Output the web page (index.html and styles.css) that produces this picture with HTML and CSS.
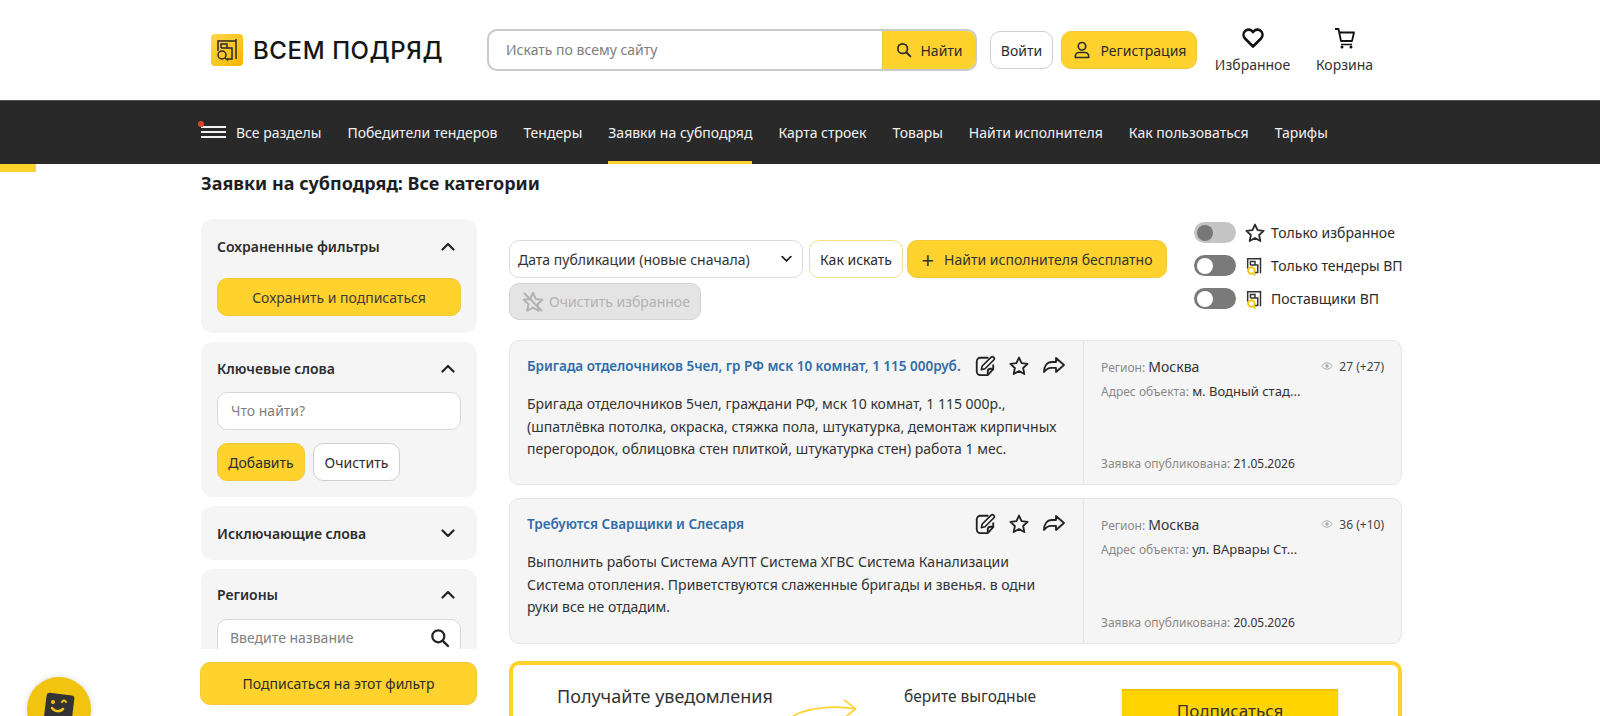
FILE: index.html
```html
<!DOCTYPE html>
<html lang="ru">
<head>
<meta charset="utf-8">
<title>Всем подряд</title>
<link rel="stylesheet" href="styles.css">
</head>
<body>
<svg class="defs" width="0" height="0" aria-hidden="true">
  <defs>
    <symbol id="star" viewBox="0 0 24 24"><path d="M12 2.8l2.8 6.1 6.6.8-4.9 4.5 1.3 6.6L12 17.5l-5.8 3.3 1.3-6.6L2.6 9.7l6.6-.8z" fill="none" stroke="currentColor" stroke-width="2" stroke-linejoin="round"/></symbol>
    <symbol id="vp" viewBox="0 0 24 24"><g fill="none" stroke="#333" stroke-width="1.6"><path d="M4 15V4h14"/><path d="M18 3v17"/><path d="M7 11V7h5v4"/><path d="M7 11h8v8h-3"/></g><circle cx="8" cy="17" r="3.6" fill="none" stroke="#f5c518" stroke-width="2"/><path d="M10.5 20l2 2.4" stroke="#f5c518" stroke-width="2"/></symbol>
    <symbol id="edit" viewBox="0 0 24 24"><path d="M21 11v4.5L15 22H7a4 4 0 0 1-4-4V7a4 4 0 0 1 4-4h8" fill="none" stroke="currentColor" stroke-width="2" stroke-linecap="round"/><path d="M15 21v-3a3 3 0 0 1 3-3h3" fill="none" stroke="currentColor" stroke-width="2"/><path d="M8 16l1-4 9.5-9.5a1.8 1.8 0 0 1 3 3L12 15z" fill="none" stroke="currentColor" stroke-width="1.8" stroke-linejoin="round"/></symbol>
    <symbol id="share" viewBox="0 0 24 24"><path d="M14 4l8 7-8 7v-4.2H9c-3 0-5 1.500-7 4.200 0-6 3-10 8-10h4z" fill="none" stroke="currentColor" stroke-width="1.800" stroke-linejoin="round"/></symbol>
    <symbol id="eye" viewBox="0 0 24 24"><path d="M1.500 12S5.500 5.500 12 5.500 22.500 12 22.500 12 18.500 18.500 12 18.500 1.500 12 1.500 12z" fill="none" stroke="currentColor" stroke-width="2"/><circle cx="12" cy="12" r="3.500" fill="currentColor"/></symbol>
    <symbol id="chev-up" viewBox="0 0 14 9"><path d="M1.500 7.500L7 2l5.500 5.500" fill="none" stroke="currentColor" stroke-width="2.200" stroke-linecap="round" stroke-linejoin="round"/></symbol>
    <symbol id="chev-down" viewBox="0 0 14 9"><path d="M1.500 1.500L7 7l5.500-5.500" fill="none" stroke="currentColor" stroke-width="2.200" stroke-linecap="round" stroke-linejoin="round"/></symbol>
    <symbol id="search" viewBox="0 0 20 20"><circle cx="8.300" cy="8.300" r="6" fill="none" stroke="currentColor" stroke-width="2.200"/><path d="M12.800 12.800l5.200 5.200" stroke="currentColor" stroke-width="2.400" stroke-linecap="round"/></symbol>
  </defs>
</svg>

<header class="header">
  <a class="logo">
    <svg class="logo-mark" viewBox="0 0 32 32"><defs><linearGradient id="lg" x1="0" y1="0" x2="1" y2="1"><stop offset="0" stop-color="#ffd84a"/><stop offset="1" stop-color="#f7b500"/></linearGradient></defs><rect width="32" height="32" rx="4" fill="url(#lg)"/><g fill="none" stroke="#2a2a2a" stroke-width="1.500"><path d="M7 17V7h18"/><path d="M25 5v20"/><path d="M10 14v-4h6v4"/><path d="M10 14h11v11h-5"/><circle cx="11" cy="21" r="4"/><path d="M14 24l3 2.500"/></g></svg>
    <span class="logo-text">ВСЕМ ПОДРЯД</span>
  </a>
  <form class="search">
    <span class="search-input">Искать по всему сайту</span>
    <span class="search-btn"><svg class="ic16"><use href="#search"/></svg>Найти</span>
  </form>
  <a class="btn btn-white login">Войти</a>
  <a class="btn btn-yellow reg">
    <svg class="ic20" viewBox="0 0 24 24"><circle cx="12" cy="7.500" r="4.500" fill="none" stroke="currentColor" stroke-width="2"/><path d="M4 21v-1.500A4.500 4.500 0 0 1 8.500 15h7a4.500 4.500 0 0 1 4.500 4.500V21z" fill="none" stroke="currentColor" stroke-width="2" stroke-linejoin="round"/></svg>
    Регистрация
  </a>
  <a class="head-link fav">
    <svg class="ic24" viewBox="0 0 24 24"><path d="M12 20.500l-8-8a5.200 5.200 0 0 1 0-7.300 5 5 0 0 1 7.200 0l.8.900.8-.9a5 5 0 0 1 7.200 0 5.200 5.200 0 0 1 0 7.300z" fill="none" stroke="#111" stroke-width="2.600" stroke-linejoin="round"/></svg>
    <span>Избранное</span>
  </a>
  <a class="head-link cart">
    <svg class="ic24" viewBox="0 0 24 24"><path d="M2 3h3.500l2.500 12h11l2-8.500H6.500" fill="none" stroke="#111" stroke-width="1.800" stroke-linejoin="round"/><path d="M8 18.500h11" stroke="#111" stroke-width="1.500"/><circle cx="9" cy="21" r="1.500" fill="#111"/><circle cx="18" cy="21" r="1.500" fill="#111"/></svg>
    <span>Корзина</span>
  </a>
</header>

<nav class="nav">
  <a class="nav-item nav-all"><span class="burger"><i></i><i></i><i></i><b></b></span>Все разделы</a>
  <a class="nav-item">Победители тендеров</a>
  <a class="nav-item">Тендеры</a>
  <a class="nav-item active">Заявки на субподряд</a>
  <a class="nav-item">Карта строек</a>
  <a class="nav-item">Товары</a>
  <a class="nav-item">Найти исполнителя</a>
  <a class="nav-item">Как пользоваться</a>
  <a class="nav-item">Тарифы</a>
</nav>
<div class="progress"></div>

<main class="page">
  <h1 class="title">Заявки на субподряд: Все категории</h1>
  <div class="columns">
    <aside class="side">
      <div class="side-scroll">
        <section class="panel panel-saved">
          <div class="panel-head"><span>Сохраненные фильтры</span><svg class="chev"><use href="#chev-up"/></svg></div>
          <a class="btn btn-yellow btn-full saved-btn">Сохранить и подписаться</a>
        </section>
        <section class="panel panel-keys">
          <div class="panel-head"><span>Ключевые слова</span><svg class="chev"><use href="#chev-up"/></svg></div>
          <div class="field">Что найти?</div>
          <div class="btn-row"><a class="btn btn-yellow add">Добавить</a><a class="btn btn-white clear">Очистить</a></div>
        </section>
        <section class="panel panel-closed">
          <div class="panel-head"><span>Исключающие слова</span><svg class="chev"><use href="#chev-down"/></svg></div>
        </section>
        <section class="panel panel-regions">
          <div class="panel-head"><span>Регионы</span><svg class="chev"><use href="#chev-up"/></svg></div>
          <div class="field field-search">Введите название<svg class="ic20 dark"><use href="#search"/></svg></div>
        </section>
      </div>
      <a class="btn btn-yellow sub-filter">Подписаться на этот фильтр</a>
    </aside>

    <div class="content">
      <div class="top">
        <div class="tools">
          <div class="select">Дата публикации (новые сначала)<svg class="sel-chev"><use href="#chev-down"/></svg></div>
          <a class="btn btn-outline how">Как искать</a>
          <a class="btn btn-yellow find"><span class="plus">+</span>Найти исполнителя бесплатно</a>
          <a class="btn btn-disabled clearfav">
            <svg class="ic24" viewBox="0 0 24 24"><use href="#star"/><path d="M3 3l18 18" stroke="currentColor" stroke-width="2"/></svg>
            Очистить избранное
          </a>
        </div>
        <div class="toggles">
          <label class="toggle"><span class="switch off"><i></i></span><svg class="ic22"><use href="#star"/></svg>Только избранное</label>
          <label class="toggle"><span class="switch on"><i></i></span><svg class="ic22"><use href="#vp"/></svg>Только тендеры ВП</label>
          <label class="toggle"><span class="switch on"><i></i></span><svg class="ic22"><use href="#vp"/></svg>Поставщики ВП</label>
        </div>
      </div>

      <article class="card">
        <div class="card-main">
          <div class="card-head">
            <a class="card-title">Бригада отделочников 5чел, гр РФ мск 10 комнат, 1 115 000руб.</a>
            <span class="card-icons"><svg class="ic22"><use href="#edit"/></svg><svg class="ic22"><use href="#star"/></svg><svg class="ic24"><use href="#share"/></svg></span>
          </div>
          <p class="card-text">Бригада отделочников 5чел, граждани РФ, мск 10 комнат, 1 115 000р., (шпатлёвка потолка, окраска, стяжка пола, штукатурка, демонтаж кирпичных перегородок, облицовка стен плиткой, штукатурка стен) работа 1 мес.</p>
        </div>
        <div class="card-side">
          <div class="meta-top"><span class="meta"><em>Регион:</em> <b class="big">Москва</b></span><span class="views"><svg class="ic12"><use href="#eye"/></svg>27 (+27)</span></div>
          <div class="meta addr"><em>Адрес объекта:</em> <b>м. Водный стад...</b></div>
          <div class="meta date"><em>Заявка опубликована:</em> <b>21.05.2026</b></div>
        </div>
      </article>

      <article class="card">
        <div class="card-main">
          <div class="card-head">
            <a class="card-title">Требуются Сварщики и Слесаря</a>
            <span class="card-icons"><svg class="ic22"><use href="#edit"/></svg><svg class="ic22"><use href="#star"/></svg><svg class="ic24"><use href="#share"/></svg></span>
          </div>
          <p class="card-text">Выполнить работы Система АУПТ Система ХГВС Система Канализации Система отопления. Приветствуются слаженные бригады и звенья. в одни руки все не отдадим.</p>
        </div>
        <div class="card-side">
          <div class="meta-top"><span class="meta"><em>Регион:</em> <b class="big">Москва</b></span><span class="views"><svg class="ic12"><use href="#eye"/></svg>36 (+10)</span></div>
          <div class="meta addr"><em>Адрес объекта:</em> <b>ул. ВАрвары Ст...</b></div>
          <div class="meta date"><em>Заявка опубликована:</em> <b>20.05.2026</b></div>
        </div>
      </article>

      <section class="banner">
        <div class="banner-a">Получайте уведомления</div>
        <svg class="banner-arrow" viewBox="0 0 80 30"><path d="M2 24C20 14 50 12 74 16M62 6l13 10-13 10" fill="none" stroke="#ffd22e" stroke-width="2" stroke-linecap="round" stroke-linejoin="round"/></svg>
        <div class="banner-b">берите выгодные<br>заказы первым</div>
        <a class="banner-btn">Подписаться</a>
      </section>
    </div>
  </div>
</main>

<div class="chat"><svg viewBox="0 0 36 36" class="chat-ic"><rect x="4" y="3" width="28" height="30" rx="3" fill="#333" transform="rotate(7 18 18)"/><circle cx="12" cy="11" r="2" fill="#f1c40f"/><path d="M21 11c1-2 3-2 4 0" stroke="#f1c40f" stroke-width="2" fill="none" stroke-linecap="round"/><path d="M11 17c3 4 8 4 11 1" stroke="#f1c40f" stroke-width="2.500" fill="none" stroke-linecap="round"/></svg></div>
</body>
</html>
```

FILE: styles.css
```css
* { box-sizing: border-box; }
html, body { margin: 0; height: 716px; overflow: hidden; background: #fff; }
body { font-family: "Noto Sans", "Open Sans", sans-serif; font-size: 14px; color: #2c2c2c; position: relative; }
a { color: inherit; text-decoration: none; }
.defs { position: absolute; }
svg { display: block; flex: none; }
.ic12 { width: 12px; height: 12px; }
.ic16 { width: 16px; height: 16px; }
.ic20 { width: 20px; height: 20px; }
.ic22 { width: 22px; height: 22px; }
.ic24 { width: 24px; height: 24px; }
.dark { color: #222; }

.header { height: 100px; display: flex; align-items: center; padding-left: 211px; }
.logo { display: flex; align-items: center; gap: 10px; width: 276px; }
.logo-mark { width: 32px; height: 32px; }
.logo-text { font-family: Inter, sans-serif; font-weight: 500; font-size: 24px; letter-spacing: 0.6px; color: #151515; white-space: nowrap; }
.search { display: flex; width: 490px; height: 42px; border: 2px solid #c9c9c9; border-radius: 10px; overflow: hidden; margin-right: 13px; }
.search-input { flex: 1; padding-left: 17px; line-height: 38px; color: #7d7d7d; font-size: 14px; }
.search-btn { width: 95px; margin: -2px -2px -2px 0; display: flex; align-items: center; justify-content: center; gap: 8px; background: #ffd22e; border: 1px solid #eec53a; border-radius: 0 10px 10px 0; font-size: 14px; }

.btn { display: flex; align-items: center; justify-content: center; border-radius: 10px; font-size: 14px; white-space: nowrap; }
.btn-yellow { background: #ffd22e; border: 1px solid #f2c93a; }
.btn-white { background: #fff; border: 1px solid #cfcfcf; }
.btn-outline { background: #fff; border: 1px solid #f5e08a; }
.btn-disabled { background: #e4e4e4; border: 1px solid #d2d2d2; color: #b2b2b2; }
.login { width: 63px; height: 38px; margin-right: 8px; }
.reg { width: 136px; height: 38px; gap: 9px; margin-right: 18px; }
.head-link { display: flex; flex-direction: column; align-items: center; color: #333; height: 48px; justify-content: space-between; }
.fav { width: 75px; margin-right: 26px; }
.cart { width: 57px; }

.nav { height: 64px; background: #292929; border-top: 1px solid #555; display: flex; padding-left: 201px; gap: 26px; color: #f2f2f2; }
.nav-item { display: flex; align-items: center; font-size: 14px; white-space: nowrap; border-bottom: 3px solid transparent; padding-top: 2px; }
.nav-item.active { border-bottom-color: #ffd22e; }
.nav-all { gap: 10px; }
.burger { position: relative; width: 25px; display: flex; flex-direction: column; gap: 3px; }
.burger i { display: block; height: 2px; background: #f2f2f2; }
.burger b { position: absolute; left: -3px; top: -5px; width: 6px; height: 6px; border-radius: 50%; background: #d9432b; }
.progress { height: 8px; width: 36px; background: #ffd22e; }

.page { padding: 0 198px 0 201px; margin-top: -8px; }
.title { margin: 0; padding: 7px 0 24px; font-size: 18px; line-height: 24px; font-weight: 700; color: #1f1f1f; }
.columns { display: flex; gap: 32px; align-items: flex-start; }

.side { width: 276px; flex: none; }
.side-scroll { height: 430px; overflow: hidden; display: flex; flex-direction: column; gap: 9px; }
.panel { background: #f5f5f5; border-radius: 12px; padding: 0 16px; flex: none; }
.panel-head { display: flex; align-items: center; justify-content: space-between; font-weight: 600; font-size: 14px; color: #2c2c2c; padding-right: 6px; }
.chev { width: 14px; height: 9px; color: #222; }
.panel-saved { height: 114px; padding-top: 17px; }
.panel-saved .panel-head { height: 20px; }
.btn-full { width: 100%; height: 38px; margin-top: 22px; color: #3b3b3b; }
.panel-keys { height: 155px; padding-top: 16px; }
.panel-keys .panel-head { height: 20px; }
.field { height: 38px; margin-top: 14px; background: #fff; border: 1px solid #d8d8d8; border-radius: 10px; padding-left: 13px; line-height: 36px; color: #7f7f7f; }
.btn-row { display: flex; gap: 8px; margin-top: 13px; }
.add { width: 88px; height: 38px; }
.clear { width: 87px; height: 38px; }
.panel-closed { height: 54px; display: flex; flex-direction: column; justify-content: center; }
.panel-regions { height: 100px; padding-top: 15px; }
.panel-regions .panel-head { height: 20px; }
.panel-regions .field { padding-left: 12px; display: flex; align-items: center; justify-content: space-between; padding-right: 10px; margin-top: 15px; }
.sub-filter { width: 277px; height: 43px; margin-top: 13px; margin-left: -1px; }

.content { flex: 1; min-width: 0; }
.top { height: 121px; display: flex; justify-content: space-between; }
.tools { display: flex; flex-wrap: wrap; gap: 5px 6px; width: 680px; padding-top: 21px; align-content: flex-start; }
.select { width: 294px; height: 38px; background: #fff; border: 1px solid #dcdcdc; border-radius: 10px; padding: 0 8px; display: flex; align-items: center; justify-content: space-between; color: #333; }
.sel-chev { width: 11px; height: 8px; color: #222; margin-right: 2px; }
.how { width: 94px; height: 38px; }
.find { width: 260px; height: 38px; gap: 10px; color: #333; margin-left: -2px; }
.plus { font-size: 22px; line-height: 20px; font-weight: 400; }
.clearfav { width: 192px; height: 37px; gap: 4px; justify-content: flex-start; padding-left: 11px; }
.toggles { padding-top: 3px; width: 208px; display: flex; flex-direction: column; gap: 12px; }
.toggle { display: flex; align-items: center; height: 21px; color: #2c2c2c; white-space: nowrap; }
.toggle .ic22 { margin: 0 5px 0 8px; }
.switch { width: 42px; height: 21px; border-radius: 11px; display: flex; align-items: center; padding: 0 3px; flex: none; }
.switch i { display: block; width: 16px; height: 16px; border-radius: 50%; }
.switch.off { background: #c4c4c4; }
.switch.off i { background: #777; }
.switch.on { background: #7a7a7a; justify-content: flex-start; }
.switch.on i { background: #fff; }

.card { display: flex; background: #f5f5f5; border: 1px solid #e6e6e6; border-radius: 10px; height: 145px; margin-bottom: 13px; }
.card + .card { height: 146px; margin-bottom: 17px; }
.card-main { flex: 1; min-width: 0; padding: 13px 18px 0 17px; }
.card-head { display: flex; justify-content: space-between; align-items: center; height: 24px; }
.card-title { color: #2f6ca8; font-weight: 600; font-size: 13.500px; white-space: nowrap; }
.card-icons { display: flex; align-items: center; gap: 12px; color: #222; margin-right: -1px; }
.card-text { margin: 15px 0 0; line-height: 22.500px; font-size: 14px; color: #333; }
.card-side { width: 318px; flex: none; border-left: 1px solid #e2e2e2; padding: 14px 17px 0 17px; display: flex; flex-direction: column; }
.meta { font-size: 12px; color: #8a8a8a; }
.meta em { font-style: normal; }
.meta b { font-weight: 400; color: #333; font-size: 13px; }
.meta b.big { font-size: 14px; }
.meta-top { display: flex; justify-content: space-between; align-items: center; height: 22px; }
.views { display: flex; align-items: center; gap: 6px; font-size: 12px; color: #444; }
.views svg { color: #aaa; }
.addr { margin-top: 5px; }
.date { margin-top: auto; margin-bottom: 12px; }
.date b { font-size: 12px; }

.banner { height: 130px; border: 4px solid #ffd22e; border-radius: 10px; display: flex; align-items: flex-start; padding: 18px 0 0 44px; position: relative; }
.banner-a { font-size: 18px; width: 233px; color: #333; line-height: 26px; }
.banner-arrow { width: 68px; height: 26px; margin: 12px 0 0 2px; }
.banner-b { width: 172px; margin-left: 24px; text-align: center; font-size: 15.500px; line-height: 26px; color: #333; }
.banner-btn { width: 216px; height: 60px; margin: 6px 0 0 66px; background: #ffd400; border-top: 2px solid #eec300; display: flex; justify-content: center; padding-top: 8px; font-size: 17px; color: #333; box-shadow: 0 1px 3px rgba(0,0,0,.2); }

.chat { position: absolute; left: 27px; top: 677px; width: 64px; height: 64px; border-radius: 50%; background: #f1c40f; box-shadow: 0 0 6px rgba(0,0,0,.15); display: flex; align-items: center; justify-content: center; }
.chat-ic { width: 36px; height: 36px; }
```
